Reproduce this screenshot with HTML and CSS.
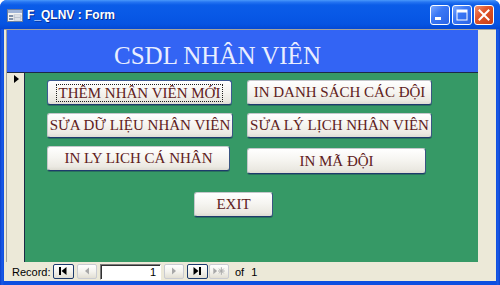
FILE: index.html
```html
<!DOCTYPE html>
<html lang="vi">
<head>
<meta charset="utf-8">
<title>F_QLNV : Form</title>
<link rel="stylesheet" href="styles.css">
</head>
<body>
<div class="window">
  <div class="titlebar">
    <svg class="app-icon" width="16" height="13" viewBox="0 0 16 13">
      <rect x="0.5" y="0.5" width="15" height="12" fill="#f4f4f2" stroke="#6d7f9c"/>
      <rect x="1" y="1" width="14" height="3" fill="#9fb3d6"/>
      <rect x="2" y="6" width="4" height="2" fill="#7f8fa8"/>
      <rect x="7" y="6" width="7" height="2" fill="#ffffff" stroke="#8a98b0" stroke-width="0.6"/>
      <rect x="2" y="9" width="4" height="2" fill="#7f8fa8"/>
      <rect x="7" y="9" width="7" height="2" fill="#ffffff" stroke="#8a98b0" stroke-width="0.6"/>
    </svg>
    <span class="title">F_QLNV : Form</span>
    <div class="caption-btns">
      <span class="cbtn cbtn-blue">
        <svg width="20" height="20" viewBox="0 0 20 20"><rect x="5" y="12" width="6" height="3" fill="#fff"/></svg>
      </span>
      <span class="cbtn cbtn-blue">
        <svg width="20" height="20" viewBox="0 0 20 20"><rect x="5" y="5" width="10" height="10" fill="none" stroke="#fff" stroke-width="1"/><rect x="5" y="5" width="10" height="2.5" fill="#fff"/></svg>
      </span>
      <span class="cbtn cbtn-red">
        <svg width="20" height="20" viewBox="0 0 20 20"><path d="M5.5 5.5L14.5 14.5M14.5 5.5L5.5 14.5" stroke="#fff" stroke-width="2" stroke-linecap="square"/></svg>
      </span>
    </div>
  </div>
  <div class="client">
    <div class="form-row">
      <div class="form">
        <div class="header"><span class="heading">CSDL NHÂN VIÊN</span></div>
        <div class="detail">
          <div class="selector"><span class="pointer"></span></div>
          <div class="canvas">
            <div class="grid">
              <button class="btn w185 btn-focus"><span class="focus-ring">THÊM NHÂN VIÊN MỚI</span></button>
              <button class="btn w185">IN DANH SÁCH CÁC ĐỘI</button>
              <button class="btn w186">SỬA DỮ LIỆU NHÂN VIÊN</button>
              <button class="btn w185">SỬA LÝ LỊCH NHÂN VIÊN</button>
              <button class="btn w183">IN LY LICH CÁ NHÂN</button>
              <button class="btn w179 lower">IN MÃ ĐỘI</button>
            </div>
            <button class="btn exit">EXIT</button>
          </div>
        </div>
      </div>
      <div class="side"></div>
    </div>
    <div class="navbar">
      <span class="rec-label">Record:</span>
      <span class="nbtn on">
        <svg width="19" height="13" viewBox="0 0 19 13"><rect x="5" y="2" width="2" height="8" fill="#000"/><path d="M12.5 2v8L7.5 6z" fill="#000"/></svg>
      </span>
      <span class="nbtn off prev">
        <svg width="18" height="13" viewBox="0 0 18 13"><path d="M11 2.5v7L7 6z" fill="#a8a8a8"/></svg>
      </span>
      <span class="recbox">1</span>
      <span class="nbtn off next">
        <svg width="18" height="13" viewBox="0 0 18 13"><path d="M7 2.5v7L11 6z" fill="#a8a8a8"/></svg>
      </span>
      <span class="nbtn on last">
        <svg width="19" height="13" viewBox="0 0 19 13"><path d="M5.5 2v8L10.5 6z" fill="#000"/><rect x="11" y="2" width="2" height="8" fill="#000"/></svg>
      </span>
      <span class="nbtn off new">
        <svg width="19" height="13" viewBox="0 0 19 13"><path d="M3.5 2.5v7L7.5 6z" fill="#a8a8a8"/><path d="M12 2v8M8.5 6h7M9.5 3.5l5 5M14.5 3.5l-5 5" stroke="#a8a8a8" stroke-width="1"/></svg>
      </span>
      <span class="of-label">of</span>
      <span class="of-count">1</span>
    </div>
  </div>
</div>
</body>
</html>
```

FILE: styles.css
```css
* {
  box-sizing: border-box;
}

html,
body {
  margin: 0;
  padding: 0;
}

body {
  width: 500px;
  height: 285px;
  overflow: hidden;
  background: #ffffff;
}

.window {
  width: 500px;
  height: 285px;
  display: flex;
  flex-direction: column;
  background: linear-gradient(90deg, #0a3fcb 0, #1a5ae6 2px, #0d4ee0 4px, #0d4ee0 496px, #1a5ae6 498px, #0a3fcb 500px);
  border-radius: 7px 7px 0 0;
  overflow: hidden;
}

.titlebar {
  height: 29px;
  flex: none;
  display: flex;
  align-items: center;
  padding: 0 6px 0 7px;
  background: linear-gradient(180deg, #4a98fb 0, #2675f2 2px, #0b5ce8 5px, #0858e6 16px, #0654e2 24px, #0448d4 29px);
}

.app-icon {
  flex: none;
  margin-right: 4px;
  margin-top: 1px;
}

.title {
  flex: 1;
  font: bold 12px "Liberation Sans", Arial, sans-serif;
  color: #ffffff;
  text-shadow: 1px 1px 0 #0a2a8a;
  margin-top: 1px;
}

.caption-btns {
  display: flex;
  gap: 2px;
  margin-top: 1px;
}

.cbtn {
  width: 20px;
  height: 20px;
  border: 1px solid #ffffff;
  border-radius: 3px;
  display: flex;
  align-items: center;
  justify-content: center;
  overflow: hidden;
}

.cbtn svg {
  flex: none;
}

.cbtn-blue {
  background: linear-gradient(135deg, #7aa8ff 0, #3b78f5 40%, #2a63e6 100%);
}

.cbtn-red {
  background: linear-gradient(135deg, #f09070 0, #e0542a 40%, #c93d14 100%);
}

.client {
  flex: 1;
  margin: 0 4px 4px;
  background: #ece9d8;
  display: flex;
  flex-direction: column;
}

.form-row {
  height: 233px;
  flex: none;
  display: flex;
  border-top: 1px solid #a4a39c;
  padding-left: 2px;
}

.form {
  width: 472px;
  display: flex;
  flex-direction: column;
  border-left: 1px solid #a4a39c;
}

.header {
  height: 42px;
  flex: none;
  background: #3364f4;
  padding: 13px 0 0 107px;
}

.heading {
  display: block;
  font: 25px/25px "Liberation Serif", "Times New Roman", serif;
  color: #e9eeff;
  white-space: nowrap;
}

.detail {
  flex: 1;
  display: flex;
  border-top: 1px solid #1c2a46;
}

.selector {
  width: 18px;
  flex: none;
  background: #ece9d8;
  border-right: 1px solid #1c2a46;
  padding: 2px 0 0 7px;
}

.pointer {
  display: block;
  width: 0;
  height: 0;
  border-left: 5px solid #000000;
  border-top: 4.5px solid transparent;
  border-bottom: 4.5px solid transparent;
}

.canvas {
  flex: 1;
  background: #369966;
  padding: 7px 0 0 22px;
}

.grid {
  display: grid;
  grid-template-columns: 200px 200px;
  row-gap: 8px;
  align-items: start;
}

.btn {
  -webkit-appearance: none;
  appearance: none;
  height: 25px;
  margin: 0;
  padding: 0;
  display: flex;
  align-items: center;
  justify-content: center;
  font: 15px/17px "Liberation Serif", "Times New Roman", serif;
  color: #5e2020;
  white-space: nowrap;
  background: linear-gradient(180deg, #ffffff 0, #f6f5f1 45%, #ebe9e2 85%, #dedcd3 100%);
  border: 1px solid #c5c7cb;
  border-right-color: #3a5582;
  border-bottom-color: #1e3b6c;
  border-radius: 3px;
  box-shadow: 0 1px 0 rgba(20, 40, 80, 0.35);
}

.btn-focus {
  border-color: #3c5a92;
  border-bottom-color: #1e3b6c;
}

.focus-ring {
  display: inline-block;
  padding: 0 2px;
  line-height: 16px;
  outline: 1px dotted #202020;
}

.w185 {
  width: 185px;
}

.w186 {
  width: 186px;
}

.w183 {
  width: 183px;
}

.w179 {
  width: 179px;
}

.lower {
  margin-top: 2px;
  height: 26px;
}

.exit {
  width: 79px;
  margin: 18px 0 0 147px;
}

.side {
  width: 18px;
  flex: none;
  background: #ece9d8;
}

.navbar {
  flex: 1;
  display: flex;
  align-items: center;
  padding-left: 8px;
  font: 11px "Liberation Sans", Tahoma, sans-serif;
  color: #000000;
}

.rec-label {
  width: 41px;
  flex: none;
  white-space: nowrap;
}

.nbtn {
  height: 15px;
  width: 21px;
  flex: none;
  display: flex;
  align-items: center;
  justify-content: center;
  border-radius: 2px;
  border: 1px solid;
  background: linear-gradient(180deg, #ffffff 0, #f4f3ee 50%, #e2dfd4 100%);
}

.nbtn.on {
  border-color: #1d3a6c;
}

.nbtn.off {
  border-color: #c9cbd2;
  width: 20px;
}

.prev {
  margin-left: 3px;
}

.recbox {
  width: 61px;
  height: 16px;
  margin-left: 3px;
  background: #ffffff;
  border: 1px solid;
  border-color: #7a7a7a #ffffff #ffffff #7a7a7a;
  box-shadow: inset 1px 1px 0 #303030;
  text-align: right;
  padding-right: 4px;
  line-height: 15px;
}

.next {
  margin-left: 3px;
}

.last {
  margin-left: 3px;
}

.new {
  margin-left: 1px;
  width: 21px;
}

.of-label {
  margin-left: 6px;
}

.of-count {
  margin-left: 7px;
}
```
